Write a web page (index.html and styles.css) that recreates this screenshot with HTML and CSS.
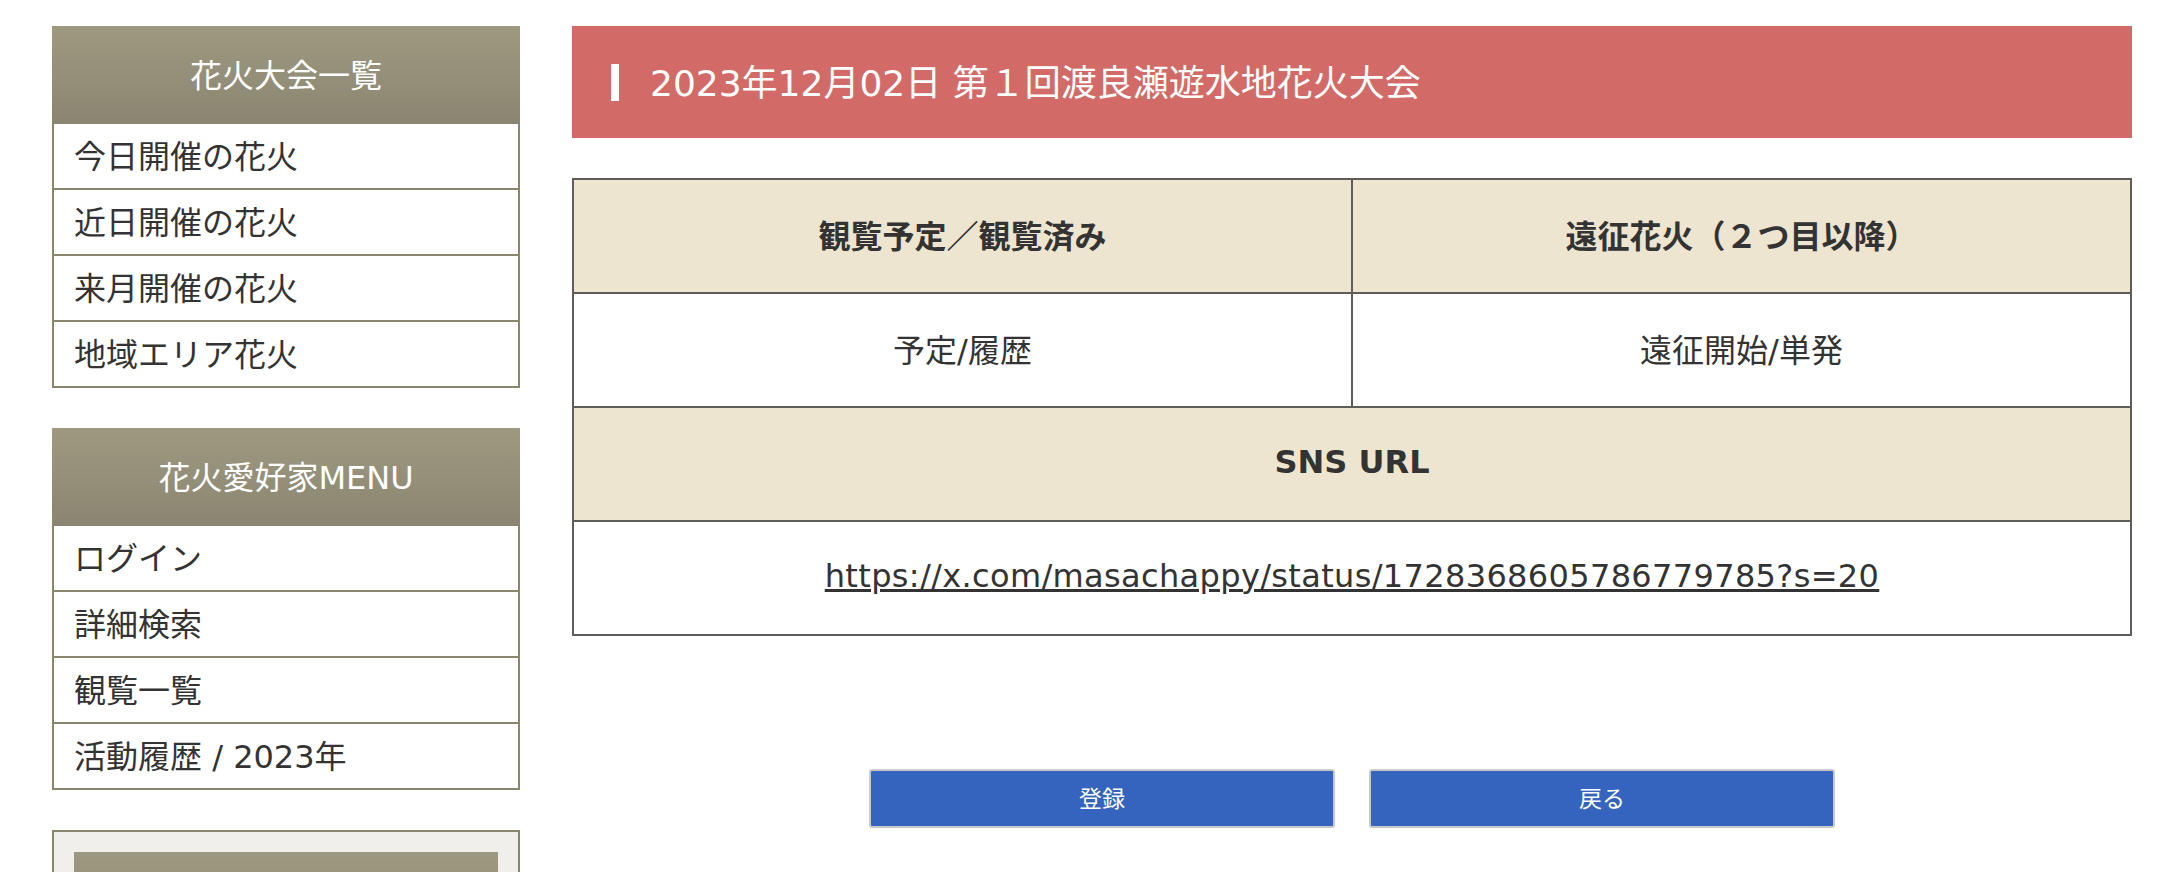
FILE: index.html
```html
<!DOCTYPE html>
<html lang="ja">
<head>
<meta charset="utf-8">
<title>第１回渡良瀬遊水地花火大会</title>
<link rel="stylesheet" href="styles.css">
</head>
<body>
<div class="page">
  <aside class="sidebar">
    <section class="side-box">
      <h2 class="side-head">花火大会一覧</h2>
      <ul class="side-list">
        <li><a href="#">今日開催の花火</a></li>
        <li><a href="#">近日開催の花火</a></li>
        <li><a href="#">来月開催の花火</a></li>
        <li><a href="#">地域エリア花火</a></li>
      </ul>
    </section>
    <section class="side-box">
      <h2 class="side-head">花火愛好家MENU</h2>
      <ul class="side-list">
        <li><a href="#">ログイン</a></li>
        <li><a href="#">詳細検索</a></li>
        <li><a href="#">観覧一覧</a></li>
        <li><a href="#">活動履歴 / 2023年</a></li>
      </ul>
    </section>
    <section class="side-panel">
      <div class="side-panel-head"></div>
    </section>
  </aside>

  <main class="content">
    <h1 class="title-bar"><span class="title-text">2023年12月02日 第１回渡良瀬遊水地花火大会</span></h1>

    <div class="detail-grid">
      <div class="cell head">観覧予定／観覧済み</div>
      <div class="cell head">遠征花火（２つ目以降）</div>
      <div class="cell">予定/履歴</div>
      <div class="cell">遠征開始/単発</div>
      <div class="cell head wide">SNS URL</div>
      <div class="cell wide"><a class="url" href="#">https://x.com/masachappy/status/1728368605786779785?s=20</a></div>
    </div>

    <div class="actions">
      <button class="btn" type="button">登録</button>
      <button class="btn" type="button">戻る</button>
    </div>
  </main>
</div>
</body>
</html>
```
FILE: styles.css
```css
html {
  overflow: hidden;
}

body {
  margin: 0;
  background: #ffffff;
  color: #333333;
  font-family: "DejaVu Sans", "Noto Sans CJK JP", sans-serif;
  font-size: 32px;
}

.page {
  display: flex;
  align-items: flex-start;
  gap: 52px;
  padding: 26px 28px 0 52px;
}

/* ---------- sidebar ---------- */
.sidebar {
  width: 468px;
  flex: none;
  display: flex;
  flex-direction: column;
  gap: 40px;
}

.side-head {
  box-sizing: border-box;
  margin: 0;
  height: 98px;
  padding-bottom: 5px;
  display: flex;
  align-items: center;
  justify-content: center;
  background: linear-gradient(#9e9a81, #898570);
  color: #ffffff;
  font-size: 32px;
  font-weight: normal;
}

.side-list {
  list-style: none;
  margin: 0;
  padding: 0;
  border: 2px solid #8a866e;
  border-top: none;
  background: #ffffff;
}

.side-list li {
  height: 64px;
  border-bottom: 2px solid #8a866e;
}

.side-list li:last-child {
  border-bottom: none;
}

.side-list a {
  box-sizing: border-box;
  display: flex;
  align-items: center;
  height: 100%;
  padding: 0 0 5px 20px;
  color: #333333;
  text-decoration: none;
}

.side-panel {
  border: 2px solid #8a866e;
  background: #f1efeb;
  padding: 20px;
}

.side-panel-head {
  height: 98px;
  background: linear-gradient(#9e9a81, #898570);
}

/* ---------- content ---------- */
.content {
  flex: 1;
  min-width: 0;
}

.title-bar {
  box-sizing: border-box;
  margin: 0;
  height: 112px;
  display: flex;
  align-items: center;
  padding: 0 0 4px 39px;
  background: #d26b67;
  color: #ffffff;
  font-size: 36px;
  font-weight: normal;
}

.title-text {
  display: flex;
  align-items: center;
}

.title-text::before {
  content: "";
  width: 8px;
  height: 37px;
  margin: 4px 31px 0 0;
  background: #ffffff;
}

.detail-grid {
  margin-top: 40px;
  display: grid;
  grid-template-columns: 1fr 1fr;
  border-top: 2px solid #5f5d5a;
  border-left: 2px solid #5f5d5a;
}

.cell {
  box-sizing: border-box;
  height: 114px;
  padding-bottom: 5px;
  display: flex;
  align-items: center;
  justify-content: center;
  border-right: 2px solid #5f5d5a;
  border-bottom: 2px solid #5f5d5a;
  background: #ffffff;
}

.cell.head {
  background: #ede5cf;
  font-weight: bold;
}

.cell.wide {
  grid-column: 1 / -1;
}

.url {
  color: #333333;
  letter-spacing: 0.35px;
  text-decoration: underline;
}

.actions {
  margin-top: 133px;
  display: flex;
  justify-content: center;
  gap: 34px;
}

.btn {
  box-sizing: border-box;
  width: 466px;
  height: 59px;
  padding: 0 0 4px;
  border: 2px solid #c9c9c9;
  border-radius: 3px;
  background: #3464bd;
  color: #ffffff;
  font-family: inherit;
  font-size: 23px;
  cursor: pointer;
}
```
